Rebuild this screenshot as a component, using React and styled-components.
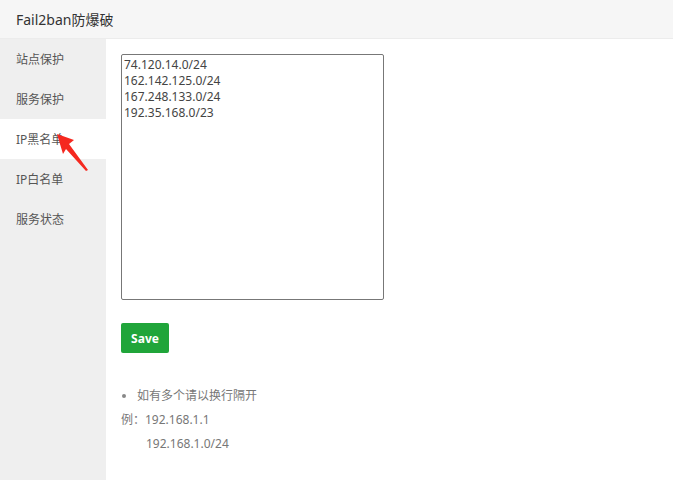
import React, { useState } from "react";
import styled, { createGlobalStyle } from "styled-components";

const GlobalStyle = createGlobalStyle`
  html, body { margin: 0; padding: 0; background: #fff; }
  body { font-family: "Noto Sans", "Noto Sans CJK SC", sans-serif; }
`;

const Wrapper = styled.div`
  width: 673px;
  height: 480px;
  display: flex;
  flex-direction: column;
  overflow: hidden;
`;
const Header = styled.div`
  height: 38px;
  flex-shrink: 0;
  display: flex;
  align-items: center;
  padding-left: 16px;
  background: #f6f6f6;
  border-bottom: 1px solid #ececec;
  font-size: 14px;
  color: #333;
`;
const Body = styled.div`
  flex: 1;
  display: flex;
  position: relative;
`;
const Sidebar = styled.div`
  width: 106px;
  flex-shrink: 0;
  background: #efefef;
  display: flex;
  flex-direction: column;
`;
const NavItem = styled.div`
  height: 40px;
  display: flex;
  align-items: center;
  padding-left: 16px;
  font-size: 12px;
  color: #555;
  background: ${(p) => (p.$active ? "#fff" : "transparent")};
  cursor: pointer;
`;
const Content = styled.div`
  flex: 1;
  padding: 15px;
  display: flex;
  flex-direction: column;
  align-items: flex-start;
`;
const Area = styled.textarea`
  width: 263px;
  height: 246px;
  box-sizing: border-box;
  border: 1px solid #777;
  border-radius: 2px;
  padding: 2px 2px;
  margin: 0;
  resize: none;
  font-family: "Noto Sans", "Noto Sans CJK SC", sans-serif;
  font-size: 12px;
  line-height: 16px;
  color: #444;
  outline: none;
`;
const Button = styled.button`
  margin-top: 23px;
  width: 48px;
  height: 30px;
  border: none;
  border-radius: 2px;
  background: #20a53a;
  color: #fff;
  font-family: "Noto Sans", sans-serif;
  font-weight: bold;
  font-size: 12px;
  padding: 0;
`;
const Tips = styled.ul`
  margin: 31px 0 0;
  padding: 0;
  list-style: none;
  font-size: 12px;
  color: #777;
`;
const Tip = styled.li`
  line-height: 24px;
  display: flex;
  padding-left: ${(p) => p.$indent || 0}px;
`;
const Dot = styled.span`
  width: 4px;
  height: 4px;
  border-radius: 50%;
  background: #888;
  margin: 10px 11px 0 1px;
`;
const Arrow = styled.svg`
  position: absolute;
  left: 50px;
  top: 90px;
`;

const navs = ["站点保护", "服务保护", "IP黑名单", "IP白名单", "服务状态"];

const App = () => {
  const [active, setActive] = useState(2);
  const [ips, setIps] = useState(
    "74.120.14.0/24\n162.142.125.0/24\n167.248.133.0/24\n192.35.168.0/23"
  );
  return (
    <Wrapper>
      <GlobalStyle />
      <Header>Fail2ban防爆破</Header>
      <Body>
        <Sidebar>
          {navs.map((n, i) => (
            <NavItem key={n} $active={i === active} onClick={() => setActive(i)}>
              {n}
            </NavItem>
          ))}
        </Sidebar>
        <Content>
          <Area value={ips} onChange={(e) => setIps(e.target.value)} />
          <Button>Save</Button>
          <Tips>
            <Tip>
              <Dot />
              如有多个请以换行隔开
            </Tip>
            <Tip>例：192.168.1.1</Tip>
            <Tip $indent={25}>192.168.1.0/24</Tip>
          </Tips>
        </Content>
        <Arrow width="50" height="50" viewBox="0 0 50 50">
          <polygon points="7,5 24,11 19,15 38,41 36,42 16,20 13,25" fill="#f5281f" />
        </Arrow>
      </Body>
    </Wrapper>
  );
};

export default App;
